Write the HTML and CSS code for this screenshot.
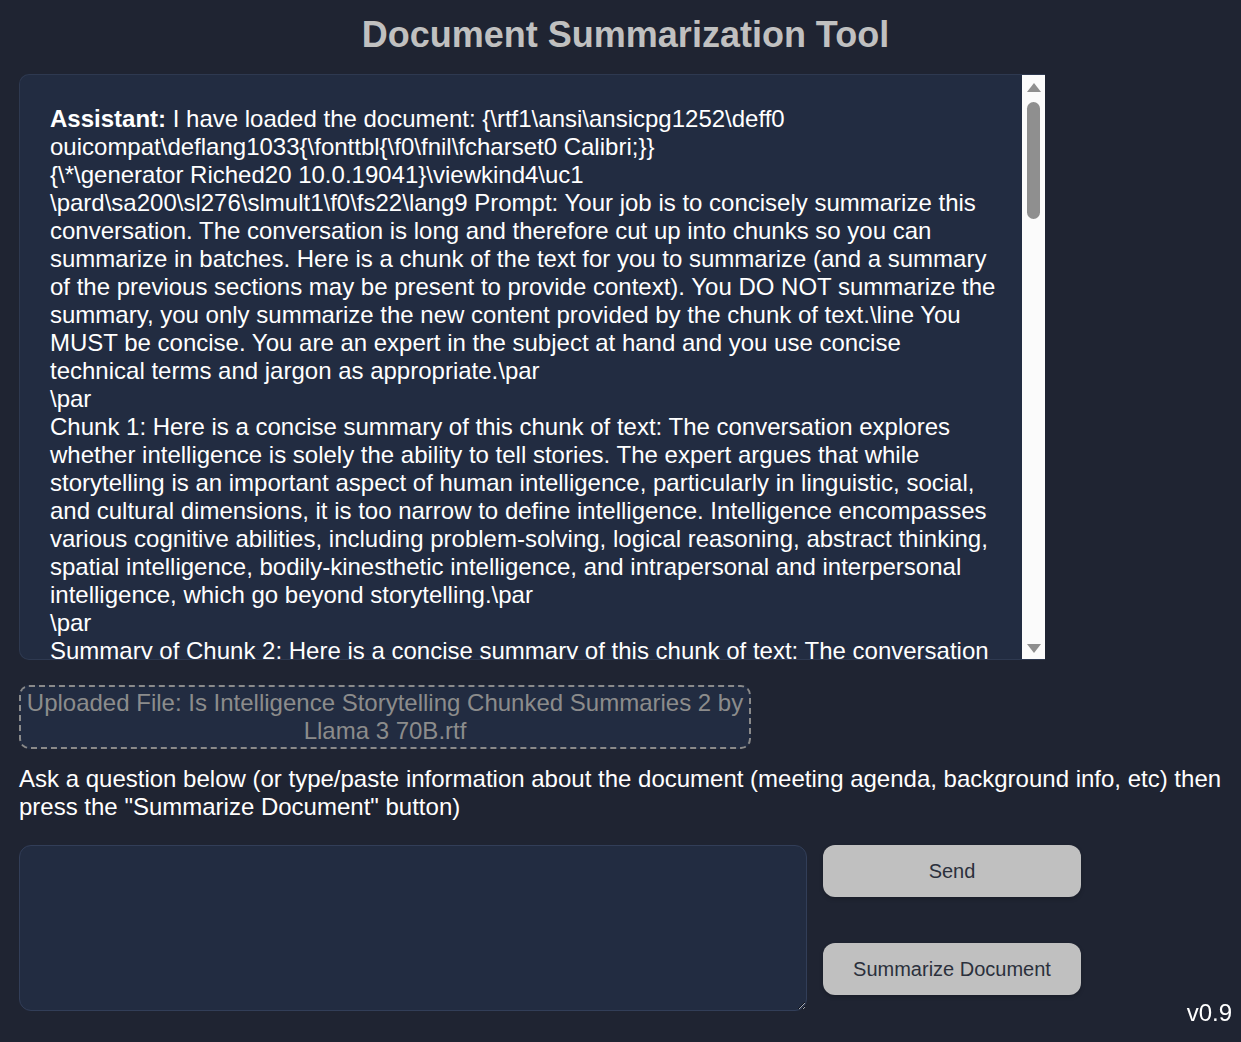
FILE: index.html
```html
<!DOCTYPE html>
<html lang="en">
<head>
<meta charset="utf-8">
<title>Document Summarization Tool</title>
<link rel="stylesheet" href="styles.css">
</head>
<body>
<div class="app">
  <h1 class="title">Document Summarization Tool</h1>
  <div class="chat">
    <div class="chat-content">
      <p class="msg"><b>Assistant:</b> I have loaded the document: {\rtf1\ansi\ansicpg1252\deff0<br>ouicompat\deflang1033{\fonttbl{\f0\fnil\fcharset0 Calibri;}}<br>{\*\generator Riched20 10.0.19041}\viewkind4\uc1 <br>\pard\sa200\sl276\slmult1\f0\fs22\lang9 Prompt: Your job is to concisely summarize this conversation. The conversation is long and therefore cut up into chunks so you can summarize in batches. Here is a chunk of the text for you to summarize (and a summary of the previous sections may be present to provide context). You DO NOT summarize the summary, you only summarize the new content provided by the chunk of text.\line You MUST be concise. You are an expert in the subject at hand and you use concise technical terms and jargon as appropriate.\par<br>\par<br>Chunk 1: Here is a concise summary of this chunk of text: The conversation explores whether intelligence is solely the ability to tell stories. The expert argues that while storytelling is an important aspect of human intelligence, particularly in linguistic, social, and cultural dimensions, it is too narrow to define intelligence. Intelligence encompasses various cognitive abilities, including problem-solving, logical reasoning, abstract thinking, spatial intelligence, bodily-kinesthetic intelligence, and intrapersonal and interpersonal intelligence, which go beyond storytelling.\par<br>\par<br>Summary of Chunk 2: Here is a concise summary of this chunk of text: The conversation continues to examine the relationship between narrative ability and general intelligence.\par</p>
    </div>
    <div class="scrollbar">
      <svg class="arrow arrow-up" width="14" height="9" viewBox="0 0 14 9"><polygon points="7,0 14,9 0,9" fill="#8f8f8f"/></svg>
      <div class="thumb"></div>
      <div class="track"></div>
      <svg class="arrow arrow-down" width="14" height="9" viewBox="0 0 14 9"><polygon points="0,0 14,0 7,9" fill="#8f8f8f"/></svg>
    </div>
  </div>
  <div class="upload">Uploaded File: Is Intelligence Storytelling Chunked Summaries 2 by Llama 3 70B.rtf</div>
  <p class="prompt">Ask a question below (or type/paste information about the document (meeting agenda, background info, etc) then press the "Summarize Document" button)</p>
  <div class="input-row">
    <textarea class="input"></textarea>
    <div class="buttons">
      <button class="btn">Send</button>
      <button class="btn">Summarize Document</button>
    </div>
  </div>
</div>
<div class="version">v0.9</div>
</body>
</html>
```

FILE: styles.css
```css
html, body {
  margin: 0;
  padding: 0;
  background: #1f2432;
  height: 100%;
  overflow: hidden;
}
body {
  font-family: "Liberation Sans", Arial, sans-serif;
  color: #ffffff;
}
.app {
  padding: 0 9px 0 19px;
  display: flex;
  flex-direction: column;
  align-items: flex-start;
}
.title {
  align-self: stretch;
  margin: 14px 0 18px;
  font-size: 36px;
  font-weight: bold;
  line-height: normal;
  color: #c0c0c0;
  text-align: center;
}
.chat {
  width: 1026px;
  height: 586px;
  box-sizing: border-box;
  display: flex;
  background: #222c41;
  border: 1px solid #2e3950;
  border-right: none;
  border-radius: 10px 0 0 10px;
  overflow: hidden;
}
.chat-content {
  flex: 1;
  padding: 30px 23px 0 30px;
  overflow: hidden;
}
.msg {
  margin: 0;
  font-size: 24px;
  line-height: normal;
  color: #ffffff;
}
.msg b {
  font-weight: bold;
}
.scrollbar {
  width: 23px;
  flex: none;
  background: #fbfbfb;
  display: flex;
  flex-direction: column;
  align-items: center;
}
.arrow {
  display: block;
  flex: none;
}
.arrow-up {
  margin-top: 8px;
}
.thumb {
  margin-top: 10px;
  width: 13px;
  height: 117px;
  border-radius: 7px;
  background: #8f8f8f;
  flex: none;
}
.track {
  flex: 1;
}
.arrow-down {
  margin-bottom: 6px;
}
.upload {
  margin-top: 25px;
  width: 732px;
  box-sizing: border-box;
  padding: 2px 5px;
  border: 2px dashed #8a8a8a;
  border-radius: 10px;
  background: #222c41;
  color: #8c8c8c;
  font-size: 24px;
  line-height: normal;
  text-align: center;
}
.prompt {
  margin: 16px 0 24px;
  font-size: 24px;
  line-height: normal;
  color: #ffffff;
}
.input-row {
  display: flex;
  gap: 16px;
}
.input {
  width: 788px;
  height: 166px;
  box-sizing: border-box;
  margin: 0;
  background: #222c41;
  border: 1px solid #323e58;
  border-radius: 12px;
  color: #ffffff;
  font-family: "Liberation Sans", Arial, sans-serif;
  font-size: 20px;
  padding: 10px;
  outline: none;
}
.buttons {
  display: flex;
  flex-direction: column;
  gap: 46px;
}
.btn {
  width: 258px;
  height: 52px;
  border: none;
  border-radius: 12px;
  background: #c0c0c0;
  color: #2b303c;
  font-family: "Liberation Sans", Arial, sans-serif;
  font-size: 20px;
  box-shadow: 0 2px 4px rgba(0, 0, 0, 0.2);
  padding: 0;
}
.version {
  position: fixed;
  right: 9px;
  bottom: 15px;
  font-size: 24px;
  line-height: normal;
  color: #ffffff;
}
```
